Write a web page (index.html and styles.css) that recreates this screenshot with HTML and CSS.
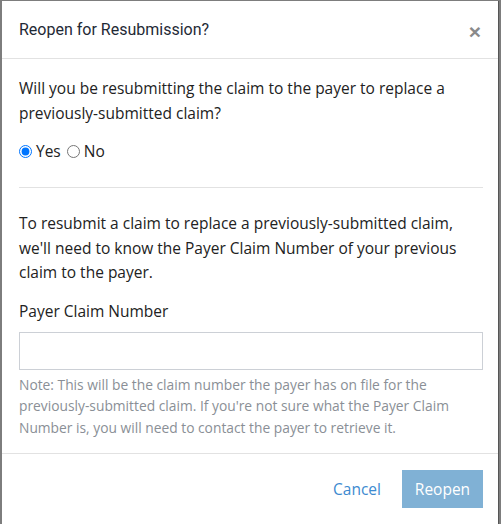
FILE: index.html
```html
<!DOCTYPE html>
<html lang="en">
<head>
  <meta charset="UTF-8" />
  <meta name="viewport" content="width=device-width, initial-scale=1.0"/>
  <title>Reopen for Resubmission</title>
  <link rel="stylesheet" href="styles.css">
</head>
<body>

  <div class="modal">
    <div class="modal-header">
      <h4 class="modal-title">Reopen for Resubmission?</h4>
      <button type="button" class="close">&times;</button>
    </div>

    <div class="modal-body">
      <p class="question">Will you be resubmitting the claim to the payer to replace a previously-submitted claim?</p>
      <div class="radios">
        <label><input type="radio" name="resubmit" checked> Yes</label>
        <label><input type="radio" name="resubmit"> No</label>
      </div>

      <hr class="divider">

      <p class="info">To resubmit a claim to replace a previously-submitted claim, we'll need to know the Payer Claim Number of your previous claim to the payer.</p>

      <label class="field-label" for="payerClaim">Payer Claim Number</label>
      <input type="text" id="payerClaim" class="field">
      <p class="note">Note: This will be the claim number the payer has on file for the previously-submitted claim. If you're not sure what the Payer Claim Number is, you will need to contact the payer to retrieve it.</p>
    </div>

    <div class="modal-footer">
      <a href="#" class="cancel">Cancel</a>
      <button type="button" class="btn-reopen" disabled>Reopen</button>
    </div>
  </div>

</body>
</html>
```

FILE: styles.css
```css
html, body {
  height: 100%;
}

body {
  margin: 0;
  padding: 0;
  background-color: #7d7d7d;
  font-family: 'Open Sans', sans-serif;
  color: #222;
}

.modal {
  margin: 1px 2px 0 2px;
  background-color: #ffffff;
  height: calc(100% - 1px);
  border-right: 1px solid #555;
  box-sizing: border-box;
}

.modal-header {
  display: flex;
  align-items: center;
  justify-content: space-between;
  height: 57px;
  padding: 0 17px;
  border-bottom: 1px solid #e2e2e2;
}

.modal-title {
  margin: 0;
  font-family: Roboto, sans-serif;
  font-weight: 400;
  font-size: 16px;
  color: #1f2a36;
}

.close {
  background: none;
  border: none;
  padding: 0;
  margin-top: 3px;
  font-family: Arial, sans-serif;
  font-size: 21px;
  font-weight: bold;
  color: #8a8a8a;
  line-height: 1;
  cursor: pointer;
}

.modal-body {
  padding: 17px 15px 0 17px;
}

.question {
  margin: 0;
  font-size: 15.5px;
  line-height: 25px;
}

.radios {
  margin-top: 14px;
  font-size: 15.5px;
  display: flex;
  gap: 6px;
}

.radios label {
  display: flex;
  align-items: center;
}

.radios input {
  margin: 0 4px 0 0;
  width: 13px;
  height: 13px;
}

.divider {
  border: none;
  border-top: 1px solid #e2e2e2;
  margin: 25px 0 23px 0;
}

.info {
  margin: 0;
  font-size: 15.5px;
  line-height: 24.5px;
}

.field-label {
  display: block;
  margin-top: 14px;
  font-size: 15.5px;
  line-height: 24px;
}

.field {
  display: block;
  width: 100%;
  box-sizing: border-box;
  height: 38px;
  margin-top: 9px;
  border: 1px solid #ccd0d6;
  border-radius: 0;
}

.note {
  margin: 4px 0 0 0;
  font-size: 13.8px;
  line-height: 21.5px;
  color: #8a8f96;
}

.modal-footer {
  display: flex;
  align-items: center;
  justify-content: flex-end;
  margin-top: 15px;
  padding: 16px 15px;
  border-top: 1px solid #e2e2e2;
}

.cancel {
  color: #3d8ad0;
  text-decoration: none;
  font-size: 15.5px;
  margin-right: 21px;
}

.btn-reopen {
  background-color: #80b1d5;
  color: #ffffff;
  border: none;
  border-radius: 0;
  width: 81px;
  height: 38px;
  font-family: 'Open Sans', sans-serif;
  font-size: 15.5px;
}
```
